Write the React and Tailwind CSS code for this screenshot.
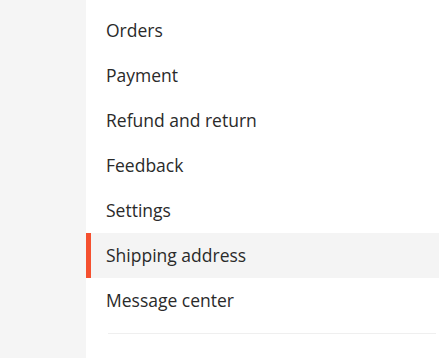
const ITEMS = [
  'Orders',
  'Payment',
  'Refund and return',
  'Feedback',
  'Settings',
  'Shipping address',
  'Message center',
];

const ACTIVE = 'Shipping address';

export default function App() {
  return (
    <div className="flex h-[358px] w-[439px] bg-[#f5f5f5] font-['Open_Sans',sans-serif]">
      <div className="w-[86px] shrink-0" />
      <nav className="flex-1 bg-white pt-2">
        <ul>
          {ITEMS.map((item) => {
            const active = item === ACTIVE;
            return (
              <li
                key={item}
                className={
                  active
                    ? 'flex h-[45px] items-center border-l-[5px] border-[#f5502f] bg-[#f4f4f4] pl-[15px] text-[17.5px] text-[#2a2a2a]'
                    : 'flex h-[45px] items-center pl-5 text-[17.5px] text-[#2a2a2a]'
                }
              >
                {item}
              </li>
            );
          })}
        </ul>
        <div className="ml-[22px] mr-[3px] mt-[10px] h-px bg-[#efefef]" />
      </nav>
    </div>
  );
}
